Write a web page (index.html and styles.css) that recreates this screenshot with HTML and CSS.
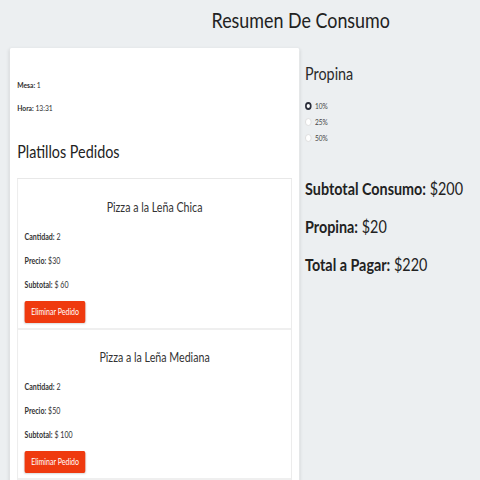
FILE: index.html
```html
<!DOCTYPE html>
<html lang="es">
<head>
<meta charset="utf-8">
<title>Resumen De Consumo</title>
<link rel="stylesheet" href="styles.css">
</head>
<body>
<div class="viewport">
<div class="page">
  <h1 class="title">Resumen De Consumo</h1>
  <div class="main">
    <section class="card">
      <p class="info"><strong>Mesa:</strong> 1</p>
      <p class="info second"><strong>Hora:</strong> 13:31</p>
      <h2 class="section-title">Platillos Pedidos</h2>
      <div class="list">
        <div class="item">
          <h3 class="item-title">Pizza a la Leña Chica</h3>
          <p class="line first"><strong>Cantidad:</strong> 2</p>
          <p class="line"><strong>Precio:</strong> $30</p>
          <p class="line"><strong>Subtotal:</strong> $ 60</p>
          <button class="btn">Eliminar Pedido</button>
        </div>
        <div class="item">
          <h3 class="item-title">Pizza a la Leña Mediana</h3>
          <p class="line first"><strong>Cantidad:</strong> 2</p>
          <p class="line"><strong>Precio:</strong> $50</p>
          <p class="line"><strong>Subtotal:</strong> $ 100</p>
          <button class="btn">Eliminar Pedido</button>
        </div>
      </div>
    </section>
    <aside class="side">
      <h2 class="side-title">Propina</h2>
      <div class="radios">
        <label class="radio"><span class="dot checked"></span>10%</label>
        <label class="radio"><span class="dot"></span>25%</label>
        <label class="radio"><span class="dot"></span>50%</label>
      </div>
      <p class="total first"><strong>Subtotal Consumo:</strong> $200</p>
      <p class="total"><strong>Propina:</strong> $20</p>
      <p class="total"><strong>Total a Pagar:</strong> $220</p>
    </aside>
  </div>
</div>
</div>
</body>
</html>
```
FILE: styles.css
```css
html, body {
  margin: 0;
  padding: 0;
  background: #eceff1;
}
body {
  font-family: Lato, "Open Sans", sans-serif;
  color: #2d2d2d;
}
.viewport {
  width: 480px;
  height: 480px;
  overflow: hidden;
}
.page {
  width: 580px;
  transform: scaleX(0.82);
  transform-origin: 0 0;
}
.title {
  margin: 0;
  height: 48px;
  padding: 6px 0 0 258px;
  box-sizing: border-box;
  font-size: 21.8px;
  line-height: 28px;
  font-weight: 400;
  color: #222;
  white-space: nowrap;
}
.main {
  display: flex;
  gap: 6px;
  padding-left: 12px;
}
.card {
  width: 353px;
  height: 440px;
  flex-shrink: 0;
  background: #fff;
  box-shadow: 0 1px 4px rgba(0,0,0,0.12);
  border-radius: 2px;
  padding: 32px 9px 0;
  box-sizing: border-box;
}
.info {
  margin: 0;
  font-size: 8.2px;
  line-height: 10px;
}
.info.second { margin-top: 13px; }
.section-title {
  margin: 28px 0 15px;
  font-size: 17.5px;
  line-height: 22px;
  font-weight: 400;
  color: #222;
}
.list {
  border: 1px solid #e8e8e8;
  border-bottom: none;
}
.item {
  padding: 19px 8px 5px;
  border-bottom: 2px solid #efefef;
}
.item:first-child { padding-top: 20px; }
.item-title {
  margin: 0;
  text-align: center;
  font-size: 13px;
  line-height: 16px;
  font-weight: 400;
  color: #333;
}
.line {
  margin: 14px 0 0;
  font-size: 8.6px;
  line-height: 10px;
  color: #333;
}
.line.first { margin-top: 17px; }
.btn {
  display: block;
  margin-top: 11px;
  height: 22px;
  padding: 0 8px;
  border: none;
  border-radius: 2px;
  background: #ef3a0f;
  color: #fff;
  font-family: Lato, sans-serif;
  font-size: 8.6px;
  box-shadow: 0 1px 2px rgba(0,0,0,0.15);
}
.side {
  padding-top: 16px;
  padding-left: 1px;
}
.side-title {
  margin: 0;
  font-size: 17.5px;
  line-height: 20px;
  font-weight: 400;
  color: #2a2a2a;
}
.radios {
  margin-top: 14px;
  display: flex;
  flex-direction: column;
}
.radio {
  display: flex;
  align-items: center;
  gap: 4px;
  height: 16px;
  font-size: 8px;
  color: #444;
}
.dot {
  width: 8px;
  height: 8px;
  border-radius: 50%;
  background: #fff;
  border: 1px solid #dcdcdc;
  box-sizing: border-box;
}
.dot.checked {
  border: 2.5px solid #2b2e3a;
}
.total {
  margin: 16px 0 0;
  font-size: 17.5px;
  line-height: 22px;
  color: #222;
  white-space: nowrap;
}
.total.first { margin-top: 32px; }
.total strong { font-weight: 700; }
```
